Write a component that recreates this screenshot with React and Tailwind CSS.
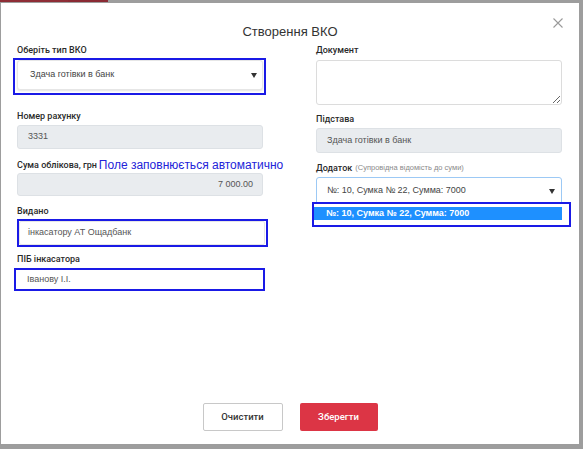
import React from "react";

const font = { fontFamily: '"Liberation Sans", Arial, sans-serif' };
const robo = { fontFamily: 'Roboto, "Liberation Sans", Arial, sans-serif' };

function Label({ children, className = "" }) {
  return (
    <div style={robo} className={`h-[12px] text-[9px] leading-[12px] font-medium text-[#2a2a2a] whitespace-nowrap ${className}`}>
      {children}
    </div>
  );
}

function Arrow() {
  return (
    <svg width="6" height="5" viewBox="0 0 6 5" className="shrink-0">
      <path d="M0 0 L6 0 L3 5 Z" fill="#333" />
    </svg>
  );
}

export default function App() {
  return (
    <div className="w-[583px] h-[449px] bg-[#9d9d9d] flex flex-col overflow-hidden" style={font}>
      <div className="h-[3px] flex shrink-0">
        <div className="w-[68px] h-[2px] bg-[#8e2d36]" />
        <div className="w-[40px] h-[2px] bg-[#8a2a33]" />
      </div>
      <div className="ml-[1px] w-[578px] h-[441px] bg-white relative flex flex-col">
        <svg className="absolute right-[16px] top-[15px]" width="10" height="10" viewBox="0 0 10 10">
          <path d="M0.5 0.5 L9.5 9.5 M9.5 0.5 L0.5 9.5" stroke="#9a9a9a" strokeWidth="1.1" />
        </svg>
        <div className="pt-[20px] h-[41px] text-center text-[13px] leading-[18px] text-[#333]">
          Створення ВКО
        </div>
        <div className="grid grid-cols-[246px_246px] gap-x-[53px] pl-[16px]">
          {/* Left column */}
          <div className="flex flex-col">
            <Label>Оберіть тип ВКО</Label>
            <div className="mt-[2px] -ml-[4px] -mr-[3px] h-[37px] border-2 border-[#1a1ae6] pl-[2px] pr-[1px] pb-[3px]">
              <div className="h-full bg-white border border-[#e6e6e6] rounded-[3px] shadow-[0_1px_2px_rgba(0,0,0,0.12)] flex items-center pl-[12px] pr-[5px] text-[9px] text-[#444]">
                <span className="flex-1">Здача готівки в банк</span>
                <Arrow />
              </div>
            </div>

            <Label className="mt-[15px]">Номер рахунку</Label>
            <div className="mt-[3px] h-[24px] bg-[#e9ecef] border border-[#dde1e5] rounded-[3px] flex items-center pl-[10px] text-[9px] text-[#555]">
              3331
            </div>

            <div className="mt-[10px] h-[12px] flex items-center whitespace-nowrap">
              <span style={robo} className="text-[9px] leading-[12px] font-medium text-[#2a2a2a]">Сума облікова, грн</span>
              <span className="ml-[2px] text-[12px] leading-[12px] tracking-[0px] text-[#2323d9]">
                Поле заповнюється автоматично
              </span>
            </div>
            <div className="mt-[2px] h-[23px] bg-[#e9ecef] border border-[#dde1e5] rounded-[3px] flex items-center justify-end pr-[9px] text-[9px] text-[#555]">
              7 000.00
            </div>

            <Label className="mt-[9px]">Видано</Label>
            <div className="mt-[2px] -mr-[5px] h-[28px] border-2 border-[#1a1ae6] pr-[1px]">
              <div className="h-full bg-white border border-[#e6e6e6] rounded-[2px] flex items-center pl-[8px] text-[9px] text-[#555]">
                інкасатору АТ Ощадбанк
              </div>
            </div>

            <Label className="mt-[6px]">ПІБ інкасатора</Label>
            <div className="mt-[3px] -ml-[3px] -mr-[2px] h-[23px] border-2 border-[#1a1ae6] flex items-center pl-[11px] text-[9px] text-[#555]">
              Іванову І.І.
            </div>
          </div>

          {/* Right column */}
          <div className="flex flex-col">
            <Label>Документ</Label>
            <textarea
              readOnly
              className="mt-[4px] h-[45px] w-full border border-[#dcdcdc] rounded-[3px] outline-none bg-white"
            />

            <Label className="mt-[8px]">Підстава</Label>
            <div className="mt-[3px] h-[25px] bg-[#e9ecef] border border-[#dde1e5] rounded-[3px] flex items-center pl-[10px] text-[9px] text-[#555]">
              Здача готівки в банк
            </div>

            <div className="mt-[9px] h-[12px] flex items-center whitespace-nowrap">
              <span style={robo} className="text-[9px] leading-[12px] font-medium text-[#2a2a2a]">Додаток</span>
              <span className="ml-[3px] text-[7.5px] leading-[12px] text-[#8a8a8a]">(Супровідна відомість до суми)</span>
            </div>
            <div className="relative mt-[3px] h-[28px]">
              <div className="h-full bg-white border border-[#9cc9f5] rounded-[3px] flex items-center pl-[10px] pr-[6px] text-[9px] text-[#444]">
                <span className="flex-1">№: 10, Сумка № 22, Сумма: 7000</span>
                <Arrow />
              </div>
              <div className="absolute -left-[4px] top-[25px] w-[259px] h-[25px] border-2 border-[#1a1ae6] bg-white pt-[3px] pr-[7px] pb-[5px]">
                <div className="h-full bg-[#1e90ff] flex items-center pl-[12px] text-[9px] font-bold text-white whitespace-nowrap">
                  №: 10, Сумка № 22, Сумма: 7000
                </div>
              </div>
            </div>
          </div>
        </div>

        <div className="mt-auto pb-[13px] flex justify-center gap-[17px]">
          <div style={robo} className="w-[80px] h-[28px] border border-[#c8c8c8] rounded-[2px] bg-white flex items-center justify-center text-[9.5px] font-medium text-[#333]">
            Очистити
          </div>
          <div style={robo} className="w-[78px] h-[28px] rounded-[2px] bg-[#dc3545] flex items-center justify-center text-[9.5px] font-medium text-white">
            Зберегти
          </div>
        </div>
      </div>
    </div>
  );
}
